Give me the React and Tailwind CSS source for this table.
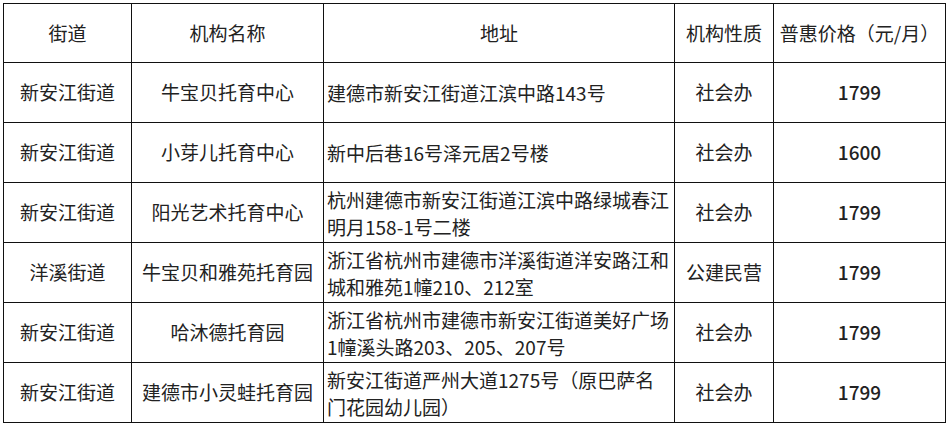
const HEADERS = ['街道', '机构名称', '地址', '机构性质', '普惠价格（元/月）']

const ROWS = [
  { street: '新安江街道', name: '牛宝贝托育中心', addr: ['建德市新安江街道江滨中路143号'], kind: '社会办', price: '1799' },
  { street: '新安江街道', name: '小芽儿托育中心', addr: ['新中后巷16号泽元居2号楼'], kind: '社会办', price: '1600' },
  { street: '新安江街道', name: '阳光艺术托育中心', addr: ['杭州建德市新安江街道江滨中路绿城春江', '明月158-1号二楼'], kind: '社会办', price: '1799' },
  { street: '洋溪街道', name: '牛宝贝和雅苑托育园', addr: ['浙江省杭州市建德市洋溪街道洋安路江和', '城和雅苑1幢210、212室'], kind: '公建民营', price: '1799' },
  { street: '新安江街道', name: '哈沐德托育园', addr: ['浙江省杭州市建德市新安江街道美好广场', '1幢溪头路203、205、207号'], kind: '社会办', price: '1799' },
  { street: '新安江街道', name: '建德市小灵蛙托育园', addr: ['新安江街道严州大道1275号（原巴萨名', '门花园幼儿园）'], kind: '社会办', price: '1799' },
]

const Cell = ({ children, left, header }) => (
  <div
    className={`border-r border-b border-[#111] flex items-center ${header ? 'h-[59px]' : 'h-[60px]'} ${
      left ? 'justify-start pl-[3px]' : 'justify-center'
    }`}>
    {children}
  </div>
)

export default function App() {
  return (
    <div className="w-[949px] h-[426px] bg-white pl-[3px] pt-[3px] font-['Noto_Sans_CJK_SC',sans-serif] text-[19px] text-[#222]">
      <div className="grid grid-cols-[128px_192px_351px_99px_172px] w-[943px] border-l border-t border-[#111]">
        {HEADERS.map((h) => (
          <Cell key={h} header>
            <span className="whitespace-nowrap">{h}</span>
          </Cell>
        ))}

        {ROWS.map((r, i) => (
          <div key={i} className="contents">
            <Cell>{r.street}</Cell>
            <Cell>{r.name}</Cell>
            <Cell left>
              <div className="leading-[27px] whitespace-nowrap">
                {r.addr.map((line, j) => (
                  <div key={j}>{line}</div>
                ))}
              </div>
            </Cell>
            <Cell>{r.kind}</Cell>
            <Cell>
              <span className="font-medium">{r.price}</span>
            </Cell>
          </div>
        ))}
      </div>
    </div>
  )
}
